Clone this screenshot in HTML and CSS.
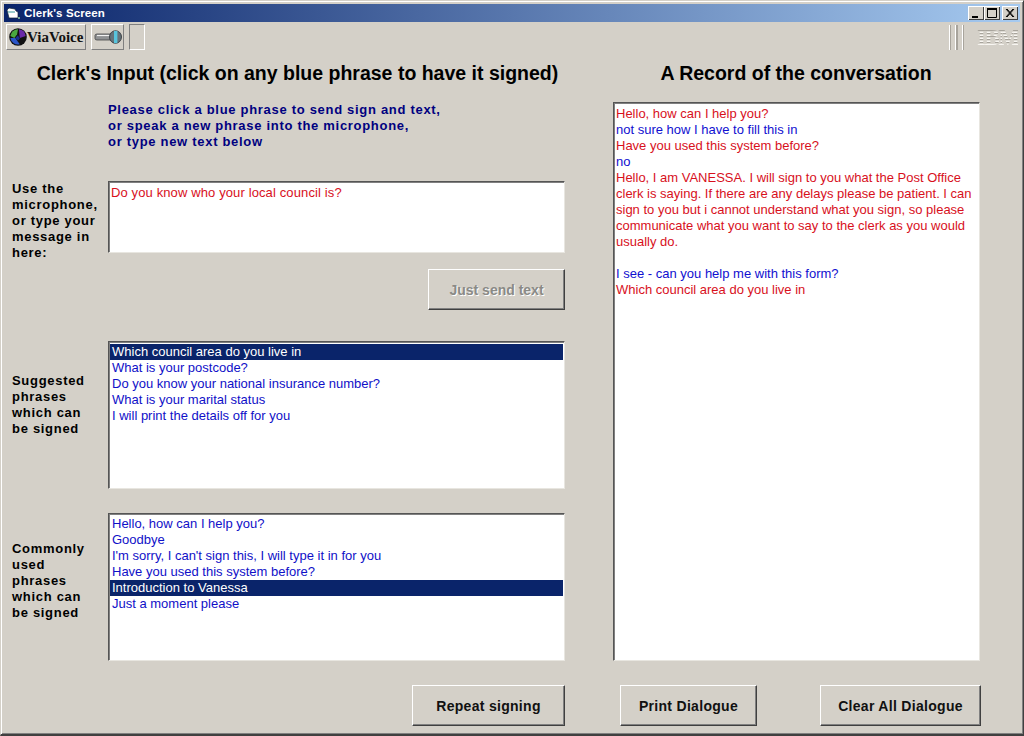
FILE: index.html
```html
<!DOCTYPE html>
<html lang="en">
<head>
<meta charset="utf-8">
<title>Clerk's Screen</title>
<link rel="stylesheet" href="styles.css">
</head>
<body>
<div class="window">
  <div class="titlebar">
    <svg class="app-icon" width="14" height="13" viewBox="0 0 14 13"><path d="M1 3 L3 1 L9 2 L10 4 L12 5 L12 11 L3 11 Z" fill="#fff" stroke="#123" stroke-width=".7"/><path d="M2 4 L9 4 L9 6 L2 6 Z" fill="#9cc"/><rect x="12" y="10" width="2" height="2" fill="#7a9"/></svg>
    <span class="title-text">Clerk's Screen</span>
    <div class="caption-buttons">
      <span class="cap-btn"><svg width="16" height="14" viewBox="0 0 16 14"><rect x="4" y="10" width="6" height="2" fill="#000"/></svg></span>
      <span class="cap-btn"><svg width="16" height="14" viewBox="0 0 16 14"><path d="M3.5 2.5h9v9h-9z" fill="none" stroke="#000"/><rect x="3" y="2" width="10" height="2" fill="#000"/></svg></span>
      <span class="cap-btn cap-close"><svg width="16" height="14" viewBox="0 0 16 14"><path d="M4 3l7 8M5 3l7 8M11 3l-7 8M12 3l-7 8" stroke="#000" stroke-width="1"/></svg></span>
    </div>
  </div>
  <div class="toolbar">
    <button class="tool-btn via-btn">
      <svg width="18" height="18" viewBox="0 0 20 20"><circle cx="10" cy="10" r="9.8" fill="#111"/><path d="M1.5 9 A8.5 8.5 0 0 1 10 1.5 L9 7 L6 11 Z" fill="#4aa83f"/><path d="M11 1.5 A8.5 8.5 0 0 1 18.5 9 L12 11 Z" fill="#6a2aa8"/><path d="M1.5 11 L7 11 L12 18 A8.5 8.5 0 0 1 1.5 11 Z" fill="#2a55c8"/><path d="M7 11 L10 8 L12 12 L10 14 Z" fill="#1a2f90"/></svg>
      <span class="via-text">ViaVoice</span>
    </button>
    <button class="tool-btn mic-btn">
      <svg width="28" height="14" viewBox="0 0 28 14"><path d="M1 5.5 Q1 4 3 4 L17 4 L17 10 L3 10 Q1 10 1 8.5 Z" fill="#8f9193" stroke="#444" stroke-width=".8"/><path d="M3 5.5 L16 5.5" stroke="#f2f2f2" stroke-width="1.2"/><ellipse cx="21.5" cy="7" rx="6" ry="6.3" fill="#66737a" stroke="#2b2f33" stroke-width=".8"/><rect x="20" y=".9" width="3.4" height="12.2" fill="#58c4dc"/></svg>
    </button>
    <div class="tool-panel"></div>
    <div class="brand">
      <span class="brand-bars"></span>
      <span class="brand-ibm">IBM</span>
    </div>
  </div>
  <div class="columns">
    <section class="left-col">
      <h1 class="heading">Clerk's Input (click on any blue phrase to have it signed)</h1>
      <p class="instructions">Please click a blue phrase to send sign and text,<br>or speak a new phrase into the microphone,<br>or type new text below</p>
      <div class="row row-input">
        <div class="label">Use the<br>microphone,<br>or type your<br>message in<br>here:</div>
        <div class="box input-box"><span class="red">Do you know who your local council is?</span></div>
      </div>
      <div class="button-row send-row"><button class="btn btn-send" disabled>Just send text</button></div>
      <div class="row row-suggested">
        <div class="label">Suggested<br>phrases<br>which can<br>be signed</div>
        <ul class="box listbox">
          <li class="selected">Which council area do you live in</li>
          <li>What is your postcode?</li>
          <li>Do you know your national insurance number?</li>
          <li>What is your marital status</li>
          <li>I will print the details off for you</li>
        </ul>
      </div>
      <div class="row row-common">
        <div class="label">Commonly<br>used<br>phrases<br>which can<br>be signed</div>
        <ul class="box listbox">
          <li>Hello, how can I help you?</li>
          <li>Goodbye</li>
          <li>I'm sorry, I can't sign this, I will type it in for you</li>
          <li>Have you used this system before?</li>
          <li class="selected">Introduction to Vanessa</li>
          <li>Just a moment please</li>
        </ul>
      </div>
      <div class="button-row repeat-row"><button class="btn btn-repeat">Repeat signing</button></div>
    </section>
    <section class="right-col">
      <h1 class="heading record-heading">A Record of the conversation</h1>
      <div class="box record">
        <p class="red">Hello, how can I help you?</p>
        <p class="blue">not sure how I have to fill this in</p>
        <p class="red">Have you used this system before?</p>
        <p class="blue">no</p>
        <p class="red wrapped">Hello, I am VANESSA. I will sign to you what the Post Office clerk is saying. If there are any delays please be patient. I can sign to you but i cannot understand what you sign, so please communicate what you want to say to the clerk as you would usually do.</p>
        <p class="blue gap">I see - can you help me with this form?</p>
        <p class="red">Which council area do you live in</p>
      </div>
      <div class="record-buttons">
        <button class="btn btn-print">Print Dialogue</button>
        <button class="btn btn-clear">Clear All Dialogue</button>
      </div>
    </section>
  </div>
</div>
</body>
</html>
```
FILE: styles.css
```css
* { box-sizing: border-box; }
html, body { margin: 0; padding: 0; }
body { width: 1024px; height: 736px; overflow: hidden; background: #d4d0c8; font-family: "Liberation Sans", Arial, sans-serif; }
.window { width: 1024px; height: 736px; background: #d4d0c8; border-right: 1px solid #404040; border-bottom: 2px solid #404040; border-left: 1px solid #d4d0c8; border-top: 1px solid #d4d0c8; box-shadow: inset 1px 1px 0 #fff, inset -1px -1px 0 #808080; display: flex; flex-direction: column; padding: 3px 3px 0 3px; }
.titlebar { height: 18px; flex: none; display: flex; align-items: center; padding: 0 2px 0 2px; background: linear-gradient(90deg, #0a246a, #a6caf0); color: #fff; }
.app-icon { margin-right: 4px; flex: none; }
.title-text { font: bold 11.5px "Liberation Sans", sans-serif; letter-spacing: 0.1px; }
.caption-buttons { margin-left: auto; display: flex; }
.cap-btn { width: 16px; height: 14px; background: #d4d0c8; box-shadow: inset 1px 1px 0 #fff, inset -1px -1px 0 #404040; display: block; }
.cap-btn svg { display: block; }
.cap-close { margin-left: 2px; }
.toolbar { height: 29px; flex: none; display: flex; align-items: center; padding: 1px 2px 0 2px; }
.tool-btn { height: 26px; padding: 0; background: #d4d0c8; border: 1px solid; border-color: #fff #808080 #808080 #fff; display: flex; align-items: center; justify-content: flex-start; }
.via-btn { width: 80px; padding-left: 2px; }
.via-text { font: bold 15px "Liberation Serif", serif; color: #111; }
.mic-btn { width: 33px; margin-left: 5px; padding-left: 2px; }
.tool-panel { width: 16px; height: 26px; margin-left: 5px; border: 1px solid; border-color: #808080 #fff #fff #808080; }
.brand { margin-left: auto; display: flex; align-items: center; gap: 12px; }
.brand-bars { width: 16px; height: 25px; background: repeating-linear-gradient(90deg, #fff 0 1px, #a8a49c 1px 2.5px, #d4d0c8 2.5px 6.5px); }
.brand-ibm { font: bold 23px/1 "Liberation Serif", serif; letter-spacing: -1.5px; width: 41px; color: transparent; background: repeating-linear-gradient(180deg, #f8f6f2 0 1px, #a8a49c 1px 2px, #dedbd4 2px 3px); -webkit-background-clip: text; background-clip: text; }
.columns { flex: 1; display: flex; min-height: 0; }
.left-col { width: 562px; flex: none; padding: 0 0 0 8px; }
.right-col { width: 418px; flex: none; padding-left: 47px; }
.heading { margin: 11px 0 0; font: bold 19.5px/22px "Liberation Sans", sans-serif; color: #000; text-align: center; white-space: nowrap; }
.left-col .heading { width: 571px; }
.record-heading { width: 366px; }
.instructions { margin: 18px 0 0 96px; font: bold 13px/16px "Liberation Sans", sans-serif; color: #000080; letter-spacing: 0.7px; white-space: nowrap; }
.row { display: flex; align-items: flex-start; }
.label { width: 96px; flex: none; font: bold 13px/16px "Liberation Sans", sans-serif; color: #000; letter-spacing: 0.7px; white-space: nowrap; }
.box { background: #fff; border: 1px solid; border-color: #555 #e8e6e0 #e8e6e0 #555; box-shadow: inset 1px 1px 0 #808080; font: 13px/16px "Liberation Sans", sans-serif; }
.row-input { margin-top: 31px; height: 72px; }
.input-box { width: 457px; height: 72px; padding: 3px 2px; letter-spacing: 0.12px; }
.red { color: #d8101c; }
.blue { color: #1010d0; }
.listbox { list-style: none; margin: 0; padding: 2px 1px; width: 457px; height: 148px; color: #1010c8; }
.listbox li { height: 16px; padding-left: 2px; }
.listbox .selected { background: #0a246a; color: #fff; }
.row-suggested { margin-top: 31px; height: 148px; }
.row-suggested .label { padding-top: 32px; }
.row-common { margin-top: 24px; height: 148px; }
.row-common .label { padding-top: 28px; }
.button-row { display: flex; justify-content: flex-end; width: 553px; }
.send-row { margin-top: 16px; }
.repeat-row { margin-top: 24px; }
.btn { height: 41px; background: #d4d0c8; border: 1px solid; border-color: #fff #404040 #404040 #fff; box-shadow: inset -1px -1px 0 #808080; font: bold 14px "Liberation Sans", sans-serif; letter-spacing: 0.3px; color: #111; padding: 0; }
.btn-send { width: 137px; color: #8a8a86; text-shadow: 1px 1px 0 #fff; letter-spacing: 0; }
.btn-repeat { width: 153px; }
.btn-print { width: 137px; }
.btn-clear { width: 161px; }
.record { width: 367px; height: 559px; margin-top: 18px; padding: 3px 2px; overflow: hidden; }
.record p { margin: 0; white-space: pre-wrap; }
.record .wrapped { width: 362px; }
.record .gap { margin-top: 16px; }
.record-buttons { display: flex; justify-content: space-between; width: 361px; margin: 24px 0 0 7px; }
```
